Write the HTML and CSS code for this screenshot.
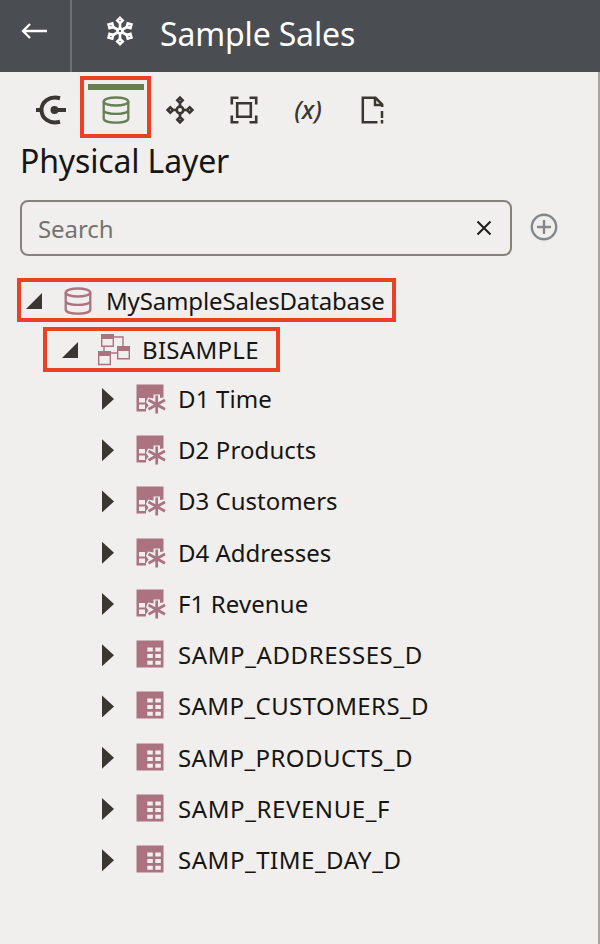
FILE: index.html
```html
<!DOCTYPE html>
<html lang="en">
<head>
<meta charset="utf-8">
<title>Sample Sales</title>
<link rel="stylesheet" href="styles.css">
</head>
<body>
<svg class="defs" aria-hidden="true">
  <symbol id="db" viewBox="0 0 28 28"><g fill="none" stroke="currentColor" stroke-width="2.300"><ellipse cx="14" cy="5.500" rx="12.300" ry="4"/><path d="M1.700 5.500V22.500C1.700 28 26.300 28 26.300 22.500V5.500M1.700 14C1.700 19.200 26.300 19.200 26.300 14"/></g></symbol>
  <symbol id="alias" viewBox="0 0 30 30"><path fill="currentColor" d="M.5.500h27v27H.5z"/><path class="cut" d="M3 14h6v4.500H3zM3 20.500h6V25H3zM17.500 10.500H24V14l6-1v17H10v-5l2.500-3.500L10 18l2-4.500 5.500 1z"/><path d="M20.700 11.500v18M12.500 16l16.500 9.200M29 16l-16.500 9.200" stroke="currentColor" stroke-width="2.700"/></symbol>
  <symbol id="table" viewBox="0 0 30 30"><path fill="currentColor" d="M.5.500h27v27H.5z"/><path class="cut" d="M11.300 7.500h5.500v4h-5.500zM19.300 7.500h5.500v4h-5.500zM11.300 14h5.500v4h-5.500zM19.300 14h5.500v4h-5.500zM11.300 20.700h5.500v4h-5.500zM19.300 20.700h5.500v4h-5.500z"/></symbol>
  <symbol id="arm" viewBox="-16 -16 32 32"><path d="M0-2V-8M0-13.200L2.700-10.500 0-7.800-2.700-10.500z" fill="none" stroke="currentColor" stroke-width="2.600"/></symbol>
</svg>
<header class="topbar">
  <div class="back"><svg width="26" height="18" viewBox="0 0 26 18"><path d="M9 2L2 9l7 7M2.500 9H26" fill="none" stroke="currentColor" stroke-width="2.300"/></svg></div>
  <svg class="flake" width="32" height="32" viewBox="-16 -16 32 32"><g fill="none" stroke="currentColor" stroke-width="2.600"><g id="f"><path d="M0-2V-8M0-13.200L2.700-10.500 0-7.800-2.700-10.500z"/></g><use href="#f" transform="rotate(60)"/><use href="#f" transform="rotate(120)"/><use href="#f" transform="rotate(180)"/><use href="#f" transform="rotate(240)"/><use href="#f" transform="rotate(300)"/><circle r="2.500"/></g></svg>
  <h1 class="title">Sample Sales</h1>
</header>
<main class="panel">
  <nav class="tabs">
    <div class="tab"><svg width="32" height="32" viewBox="-16 -16 32 32"><g fill="none" stroke="currentColor" stroke-width="4"><path d="M8-11.800C-3-14.500-10.500-8-10.500 0S-3 14.500 8 11.800M-16 0h5M3 0h11"/></g><circle cx="2.500" r="4" fill="currentColor"/></svg></div>
    <div class="tab selected"><svg width="28" height="28"><use href="#db"/></svg></div>
    <div class="tab"><svg width="32" height="32" viewBox="-16 -16 32 32"><path d="M0-12.300L2.600-9.700 0-7-2.600-9.700zM0 12.300L2.600 9.700 0 7-2.600 9.700zM-12.300 0L-9.700-2.600-7 0-9.700 2.600zM12.300 0L9.700-2.600 7 0 9.700 2.600zM0-7v4M0 3v4M-7 0h4M3 0h4" fill="none" stroke="currentColor" stroke-width="2.700"/><circle r="3.300" fill="none" stroke="currentColor" stroke-width="2.700"/></svg></div>
    <div class="tab"><svg width="32" height="32" viewBox="-16 -16 32 32"><path d="M-12.200-5.500v-6.700h6.700M5.500-12.200h6.700v6.700M12.200 5.500v6.700H5.500M-5.500 12.200h-6.700V5.500M-6.800-6.800H6.800V6.800H-6.800z" fill="none" stroke="currentColor" stroke-width="2.600"/></svg></div>
    <div class="tab expr">(x)</div>
    <div class="tab"><svg width="32" height="32" viewBox="-16 -16 32 32"><path d="M5.500 12.200H-9.200v-24.400H3.500L10.200-5.500V-3M3-12v7h7M10 1v7M10 10v3.500" fill="none" stroke="currentColor" stroke-width="2.500"/></svg></div>
  </nav>
  <h2 class="heading">Physical Layer</h2>
  <div class="searchrow">
    <div class="search"><span class="placeholder">Search</span><svg width="16" height="16" viewBox="0 0 16 16"><path d="M1.500 1.500l13 13M14.500 1.500l-13 13" stroke="currentColor" stroke-width="2"/></svg></div>
    <svg class="add" width="28" height="28" viewBox="-14 -14 28 28"><g fill="none" stroke="currentColor" stroke-width="2.400"><circle r="12.200"/><path d="M-7 0H7M0-7V7"/></g></svg>
  </div>
  <div class="tree">
    <div class="node root"><svg class="open" width="16" height="16"><path d="M16 0v16H0z" fill="currentColor"/></svg><svg class="icon" width="28" height="28"><use href="#db"/></svg><span class="label l-root">MySampleSalesDatabase</span></div>
    <div class="node schema"><svg class="open" width="16" height="16"><path d="M16 0v16H0z" fill="currentColor"/></svg><svg class="icon" width="32" height="33" viewBox="0 0 32 33"><g fill="none" stroke="currentColor" stroke-width="1.400"><path d="M15.500 4H25v9M6 13v5M13 20h6M3.700 1.700h11.600v11.600H3.700zM19.700 14.200h11.600v11.600H19.700zM.7 19.200h11.600v12.300H.7z"/></g><path fill="currentColor" d="M3 1h13v5H3zM19 13h13v5H19zM0 18h13v5H0z"/></svg><span class="label l-schema">BISAMPLE</span></div>
    <div class="node leaf"><i class="closed"></i><svg class="icon" width="30" height="30"><use href="#alias"/></svg><span class="label l-time">D1 Time</span></div>
    <div class="node leaf"><i class="closed"></i><svg class="icon" width="30" height="30"><use href="#alias"/></svg><span class="label l-prod">D2 Products</span></div>
    <div class="node leaf"><i class="closed"></i><svg class="icon" width="30" height="30"><use href="#alias"/></svg><span class="label">D3 Customers</span></div>
    <div class="node leaf"><i class="closed"></i><svg class="icon" width="30" height="30"><use href="#alias"/></svg><span class="label">D4 Addresses</span></div>
    <div class="node leaf"><i class="closed"></i><svg class="icon" width="30" height="30"><use href="#alias"/></svg><span class="label l-prod">F1 Revenue</span></div>
    <div class="node leaf"><i class="closed"></i><svg class="icon" width="30" height="30"><use href="#table"/></svg><span class="label l-wide">SAMP_ADDRESSES_D</span></div>
    <div class="node leaf"><i class="closed"></i><svg class="icon" width="30" height="30"><use href="#table"/></svg><span class="label l-mid">SAMP_CUSTOMERS_D</span></div>
    <div class="node leaf"><i class="closed"></i><svg class="icon" width="30" height="30"><use href="#table"/></svg><span class="label l-mid">SAMP_PRODUCTS_D</span></div>
    <div class="node leaf"><i class="closed"></i><svg class="icon" width="30" height="30"><use href="#table"/></svg><span class="label l-wide">SAMP_REVENUE_F</span></div>
    <div class="node leaf"><i class="closed"></i><svg class="icon" width="30" height="30"><use href="#table"/></svg><span class="label l-day">SAMP_TIME_DAY_D</span></div>
  </div>
</main>
</body>
</html>
```
FILE: styles.css
```css
*, *::before, *::after { box-sizing: border-box; }
body { margin: 0; height: 944px; display: flex; flex-direction: column; overflow: hidden; background: #f0efed; color: #161513; font-family: "Noto Sans", "Open Sans", sans-serif; }
svg { display: block; flex: none; }
.defs { position: absolute; width: 0; height: 0; }
.topbar { height: 72px; flex: none; display: flex; background: #4a4d52; color: #fff; }
.back { width: 72px; border-right: 2px solid #6d7074; padding: 22px 0 0 21px; }
.flake { margin: 15px 0 0 32px; }
.title { margin: 12px 0 0 24px; font-size: 32px; line-height: 44px; font-weight: 400; letter-spacing: -0.15px; white-space: nowrap; }
.panel { flex: 1; border-right: 2px solid #aaa5a0; }
.tabs { height: 67px; padding-left: 20px; display: flex; color: #3a3632; }
.tab { width: 64px; padding-top: 9px; display: flex; align-items: center; justify-content: center; }
.selected { position: relative; color: #667f53; }
.selected::before { content: ""; position: absolute; left: 4px; top: 12px; width: 56px; height: 6px; background: #667f53; }
.selected::after { content: ""; position: absolute; left: -4px; top: 4px; width: 71px; height: 62px; border: 4px solid #ea4025; }
.expr { font-size: 25px; font-style: italic; font-weight: 500; padding-bottom: 3px; }
.heading { margin: 0 0 0 20px; height: 61px; font-size: 32px; line-height: 44px; font-weight: 400; letter-spacing: -0.15px; white-space: nowrap; }
.searchrow { display: flex; padding-left: 20px; gap: 18px; height: 78px; }
.search { width: 492px; height: 56px; border: 2px solid #85827c; border-radius: 8px; display: flex; align-items: center; justify-content: space-between; padding: 0 18px 0 16px; color: #201e1c; }
.placeholder { color: #76736f; font-size: 24px; line-height: 32px; padding-top: 2px; letter-spacing: -0.1px; }
.add { margin-top: 13px; color: #85888b; }
.node { display: flex; align-items: center; color: #ab7380; }
.root { margin-left: 17px; width: 379px; height: 44px; border: 4px solid #ea4025; padding-left: 5px; }
.schema { margin: 5px 0 1.3px 43px; width: 237px; height: 45px; border: 4px solid #ea4025; padding-left: 15px; }
.leaf { height: 51.25px; padding-left: 102px; }
.open { color: #3a3632; margin-right: 22px; }
.root .open { position: relative; top: 1px; }
.schema .open { margin-right: 20px; }
.closed { width: 12px; height: 22px; background: #3a3632; clip-path: polygon(0 0, 100% 50%, 0 100%); margin-right: 22px; }
.root .icon { margin-right: 14px; position: relative; top: 1px; }
.schema .icon { margin-right: 12px; }
.leaf .icon { margin-right: 12px; }
.label { color: #161513; font-size: 24px; line-height: 32px; white-space: nowrap; }
.l-root { padding-top: 2px; letter-spacing: -0.15px; }
.l-schema { letter-spacing: 0.3px; }
.l-time { letter-spacing: 0.15px; }
.l-prod { letter-spacing: 0.1px; }
.l-wide { letter-spacing: 0.6px; }
.l-day { letter-spacing: 0.54px; }
.l-mid { letter-spacing: 0.42px; }
.cut { fill: #f0efed; }
```
